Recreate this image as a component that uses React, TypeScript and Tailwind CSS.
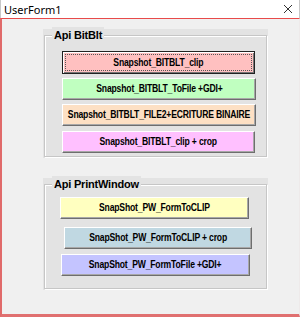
import React from 'react';

type Btn = { label: string; bg: string; ml: string; w: string; mt: string; focus?: boolean };

const group1: Btn[] = [
  { label: 'Snapshot_BITBLT_clip', bg: 'bg-[#ffc0c0]', ml: 'ml-[17px]', w: 'w-[193px]', mt: 'mt-[15px]', focus: true },
  { label: 'Snapshot_BITBLT_ToFile +GDI+', bg: 'bg-[#c0ffc0]', ml: 'ml-[17px]', w: 'w-[194px]', mt: 'mt-[4px]' },
  { label: 'Snapshot_BITBLT_FILE2+ECRITURE BINAIRE', bg: 'bg-[#fde0c4]', ml: 'ml-[17px]', w: 'w-[194px]', mt: 'mt-[4px]' },
  { label: 'Snapshot_BITBLT_clip + crop', bg: 'bg-[#ffc0ff]', ml: 'ml-[17px]', w: 'w-[193px]', mt: 'mt-[5px]' },
];

const group2: Btn[] = [
  { label: 'SnapShot_PW_FormToCLIP', bg: 'bg-[#ffffc0]', ml: 'ml-[15px]', w: 'w-[189px]', mt: 'mt-[12px]' },
  { label: 'SnapShot_PW_FormToCLIP + crop', bg: 'bg-[#c0d8e2]', ml: 'ml-[19px]', w: 'w-[188px]', mt: 'mt-[8px]' },
  { label: 'SnapShot_PW_FormToFile +GDI+', bg: 'bg-[#c4c4ff]', ml: 'ml-[16px]', w: 'w-[189px]', mt: 'mt-[5px]' },
];

const FormButton = ({ b }: { b: Btn }) => (
  <div
    className={`${b.ml} ${b.w} ${b.mt} h-[22px] ${b.bg} ${
      b.focus
        ? 'h-[23px] border border-[#222] shadow-[inset_1px_1px_0_#fff,inset_-1px_-1px_0_#777]'
        : 'border border-t-white border-l-white border-r-[#6e6e6e] border-b-[#6e6e6e] shadow-[inset_-1px_-1px_0_#a8a8a8]'
    } flex items-center justify-center relative`}
  >
    {b.focus && (
      <div className="absolute inset-[2px] border border-dotted border-[#555]" />
    )}
    <span className="text-[10px] font-bold text-black tracking-[-0.2px] scale-x-[0.86] whitespace-nowrap leading-none">
      {b.label}
    </span>
  </div>
);

const Group = ({ title, buttons, h }: { title: string; buttons: Btn[]; h: string }) => (
  <div className={`w-[225px] ${h} bg-[#e3e3e3] pt-[6px] px-[1px] pb-[1px] flex flex-col`}>
    <div className="relative flex-1 border border-[#c6c6c6] shadow-[inset_1px_1px_0_#fff,1px_1px_0_#fff] flex flex-col">
      <span className="absolute left-[7px] -top-[9px] bg-[#e3e3e3] px-[2px] text-[11px] font-bold text-black tracking-[-0.2px] leading-4">
        {title}
      </span>
      {buttons.map((b) => (
        <FormButton key={b.label} b={b} />
      ))}
    </div>
  </div>
);

export default function App() {
  return (
    <div
      className="w-[300px] h-[317px] bg-white flex flex-col"
      style={{ fontFamily: '"Liberation Sans", Arial, sans-serif' }}
    >
      <div className="h-[18px] flex items-center justify-between pl-[3px] pr-[6px] border-l border-r border-[#c8c8c8]">
        <span className="text-[11px] text-black leading-none" style={{ fontFamily: '"Noto Sans", sans-serif' }}>UserForm1</span>
        <svg width="10" height="10" viewBox="0 0 10 10">
          <path d="M1 1 L9 9 M9 1 L1 9" stroke="#333" strokeWidth="1" />
        </svg>
      </div>
      <div className="flex-1 bg-[#f0f0f0] border-t border-t-[#e84a4a] border-l-2 border-l-[#e06a6a] border-b-[3px] border-b-[#e07070] border-r border-r-[#eeeaea] flex flex-col pl-[41px] pt-[10px]">
        <Group title="Api BitBlt" buttons={group1} h="h-[129px]" />
        <div className="h-[20px]" />
        <Group title="Api PrintWindow" buttons={group2} h="h-[112px]" />
      </div>
    </div>
  );
}
